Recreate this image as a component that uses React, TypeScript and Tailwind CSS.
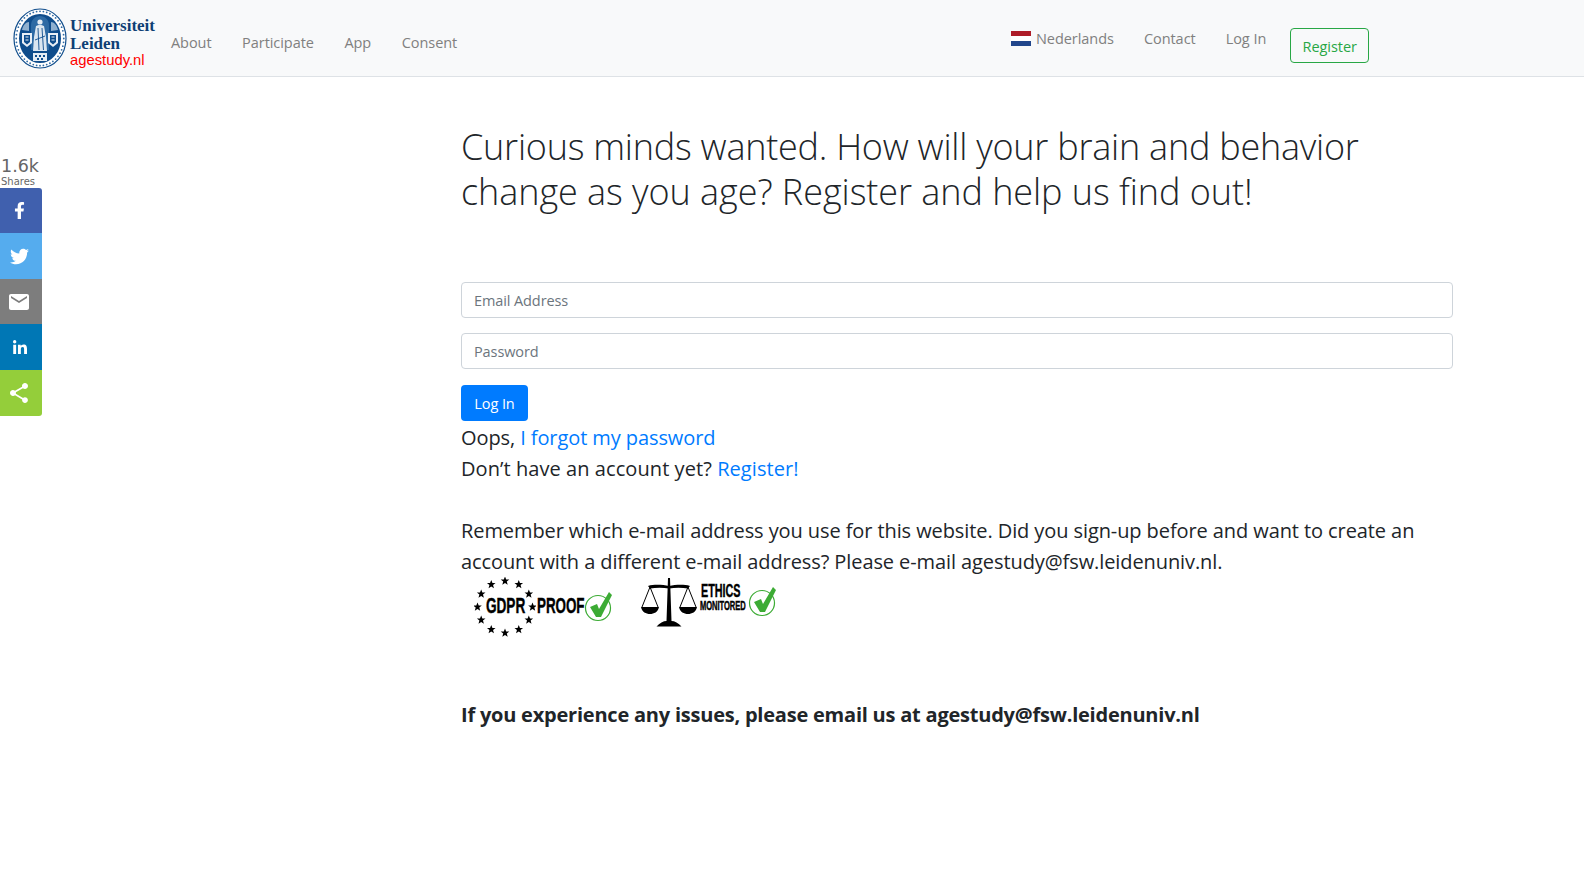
import { FaFacebookF, FaLinkedinIn, FaTwitter } from "react-icons/fa";
import { IoMdShare } from "react-icons/io";
import { MdEmail } from "react-icons/md";

const SANS = "font-['Open_Sans','Noto_Sans',sans-serif]";
const BADGE_TEXT = "absolute origin-left font-['Liberation_Sans',sans-serif] font-bold text-black [-webkit-text-stroke:0.4px_#000]";

function Seal() {
  const dots = Array.from({ length: 44 }, (_, i) => (i / 44) * Math.PI * 2);
  return (
    <svg width="54" height="61" viewBox="0 0 54 61" className="shrink-0">
      <ellipse cx="27" cy="30.5" rx="26" ry="29.5" fill="#fff" stroke="#0f4d8c" strokeWidth="1.2" />
      {dots.map((a, i) => (
        <circle key={i} cx={27 + 23.8 * Math.cos(a)} cy={30.5 + 27.2 * Math.sin(a)} r="0.9" fill="#2f6aa3" />
      ))}
      <ellipse cx="27" cy="30.5" rx="21" ry="24.5" fill="#0f4d8c" />
      {/* arches behind the figure */}
      <path d="M9 22c1-5 4-8 7-8v9zM45 22c-1-5-4-8-7-8v9z" fill="#8fb0cf" />
      <path d="M27 8c-5 0-9 4-9 9v25h18V17c0-5-4-9-9-9z" fill="#2d6aa4" />
      {/* figure */}
      <circle cx="27" cy="14" r="2.600" fill="#e4ecf4" />
      <path d="M23 18c2-1.500 6-1.500 8 0l2 11 1 14H20l1-14z" fill="#dbe6f0" />
      <path d="M25 20l1 22M29 20l1.500 22M22 32l10-4" stroke="#0f4d8c" strokeWidth="0.9" fill="none" />
      {/* shields */}
      <path d="M9 25h10v10l-5 4-5-4z" fill="#eaf0f6" />
      <path d="M35 25h10v10l-5 4-5-4z" fill="#eaf0f6" />
      <path d="M11 27h6v7l-3 2.500-3-2.500zM37 27h6v7l-3 2.500-3-2.500z" fill="#0f4d8c" />
      <path d="M12.500 29h3M12.500 32h3M38.500 29h3M38.500 32h3" stroke="#eaf0f6" strokeWidth="1" />
      <rect x="20" y="45" width="14" height="8" fill="#e4ecf4" />
      <path d="M22 47h2v2h-2zM26 47h2v2h-2zM30 47h2v2h-2zM24 50h2v2h-2zM28 50h2v2h-2z" fill="#0f4d8c" />
    </svg>
  );
}

function Star({ x, y }: { x: number; y: number }) {
  return (
    <polygon
      transform={`translate(${x} ${y})`}
      points="0,-4.500 1.200,-1.400 4.300,-1.400 1.800,.6 2.700,3.800 0,1.900 -2.700,3.800 -1.800,.6 -4.300,-1.400 -1.200,-1.400"
      fill="#000"
    />
  );
}

function Tick() {
  return (
    <svg width="30" height="32" viewBox="0 0 30 32" className="shrink-0">
      <circle cx="14" cy="18" r="12.500" fill="#fff" stroke="#3cab34" strokeWidth="1.200" />
      <path d="M6 17l7-3 2 5L25 2l3 3-11 22h-5z" fill="#3cab34" />
    </svg>
  );
}

function GdprBadge() {
  const stars = Array.from({ length: 12 }, (_, i) => (i / 12) * Math.PI * 2);
  return (
    <div className="relative h-[60px] w-[142px]">
      <svg width="62" height="60" viewBox="0 0 62 60">
        {stars.map((a, i) => (
          <Star key={i} x={31 + 27.5 * Math.sin(a)} y={30 - 26 * Math.cos(a)} />
        ))}
      </svg>
      <span className={`${BADGE_TEXT} left-[12px] top-[16px] scale-x-[.62] text-[22px] leading-[26px]`}>GDPR</span>
      <span className={`${BADGE_TEXT} left-[63px] top-[16px] scale-x-[.61] text-[22px] leading-[26px]`}>PROOF</span>
      <div className="absolute left-[110px] top-[13px]">
        <Tick />
      </div>
    </div>
  );
}

function EthicsBadge() {
  return (
    <div className="relative h-[60px] w-[142px]">
      <svg width="60" height="52" viewBox="0 0 60 52" className="ml-[-2px] mt-[1px]">
        <path d="M28 0h2l1.500 43c3 0 7 2 10 5.500H16.500c3-3.500 7-5.500 10-5.500z" fill="#000" />
        <path d="M8 8c7-2 15-1 21 0 6-1 14-2 21 0l-2 2.500c-6-1-13-1-19 0-6-1-13-1-19 0z" fill="#000" />
        <path d="M10 9L2 29M10 9l8 20M48 9l-8 20M48 9l8 20" stroke="#000" strokeWidth="1" fill="none" />
        <path d="M1 29h18c-1 5-5 7-9 7s-8-2-9-7zM39 29h18c-1 5-5 7-9 7s-8-2-9-7z" fill="#000" />
      </svg>
      <span className={`${BADGE_TEXT} left-[59px] top-[3px] scale-x-[.6] text-[18px] leading-[22px]`}>ETHICS</span>
      <span className={`${BADGE_TEXT} left-[58px] top-[22px] scale-x-[.63] text-[12px] leading-[14px]`}>MONITORED</span>
      <div className="absolute left-[106px] top-[8px]">
        <Tick />
      </div>
    </div>
  );
}

function Flag() {
  return (
    <span className="flex h-[15px] w-5 flex-col">
      <span className="h-[5px] bg-[#ae1c28]" />
      <span className="h-[5px] bg-white" />
      <span className="h-[5px] bg-[#21468b]" />
    </span>
  );
}

function ShareBar() {
  return (
    <div className="absolute left-0 top-[157px] w-[42px] font-['DejaVu_Sans',sans-serif] text-[#666]">
      <div className="pl-[1px] text-[17.500px] leading-[18px]">1.6k</div>
      <div className="pl-[1px] text-[10px] leading-[13px]">Shares</div>
      <div className="flex h-[45px] items-center rounded-tr-[3px] bg-[#4060ae] pl-[11px] text-white">
        <FaFacebookF size={17} />
      </div>
      <div className="flex h-[46px] items-center bg-[#55acee] pl-[10px] text-white">
        <FaTwitter size={19} />
      </div>
      <div className="flex h-[45px] items-center bg-[#7d7d7d] pl-[7px] text-white">
        <MdEmail size={24} />
      </div>
      <div className="flex h-[46px] items-center bg-[#0077b5] pl-[12px] pt-[2px] text-white">
        <FaLinkedinIn size={16} />
      </div>
      <div className="flex h-[46px] items-center rounded-br-[3px] bg-[#94ce3a] pl-[7px] text-white">
        <IoMdShare size={24} />
      </div>
    </div>
  );
}

export default function App() {
  const navLink = "text-[#80807f] text-[14.500px] tracking-[-0.05px]";
  return (
    <div className={`relative min-h-[885px] bg-white ${SANS}`}>
      {/* navbar */}
      <nav className="flex h-[77px] items-start border-b border-[#dee2e6] bg-[#f8f9fa]">
        <div className="flex w-[980px] items-center pl-[13px] pt-[8px]">
          <Seal />
          <div className="ml-[3px] w-[90px] font-['Liberation_Serif',serif]">
            <div className="mt-[8px] text-[17px] leading-[18px] font-bold text-[#0f3f75]">Universiteit</div>
            <div className="text-[17px] leading-[18px] font-bold text-[#0f3f75]">Leiden</div>
            <div className="font-['Liberation_Sans',sans-serif] text-[14.800px] leading-[15px] text-[#ff0000]">agestudy.nl</div>
          </div>
          <div className="ml-[11px] flex gap-[30.500px] pt-[9px]">
            <a className={navLink}>About</a>
            <a className={navLink}>Participate</a>
            <a className={navLink}>App</a>
            <a className={navLink}>Consent</a>
          </div>
        </div>
        <div className="ml-[31px] flex items-start gap-[30px] pt-[28px]">
          <a className={`flex items-center gap-[5px] ${navLink}`}>
            <Flag />
            Nederlands
          </a>
          <a className={navLink}>Contact</a>
          <a className={navLink}>Log In</a>
          <button className="ml-[-6px] h-[35px] w-[79px] rounded border border-[#28a745] pt-[2px] text-[14.500px] tracking-[-0.05px] text-[#28a745]">
            Register
          </button>
        </div>
      </nav>

      <ShareBar />

      <main className="ml-[461px] w-[992px] pt-[47px] text-[20px] leading-[31px] tracking-[-0.09px] text-[#212529]">
        <h1 className="text-[36px] leading-[45px] font-light tracking-[-0.24px]">
          Curious minds wanted. How will your brain and behavior{" "}
          <span className="tracking-[-0.06px]">change as you age? Register and help us find out!</span>
        </h1>

        <form className="mt-[68px] flex flex-col gap-[15px]">
          <input
            placeholder="Email Address"
            className="h-[36px] rounded border border-[#ced4da] px-3 text-[14.500px] tracking-[-0.1px] placeholder:text-[#6c757d]"
          />
          <input
            placeholder="Password"
            className="h-[36px] rounded border border-[#ced4da] px-3 text-[14.500px] tracking-[-0.1px] placeholder:text-[#6c757d]"
          />
        </form>

        <button className="mt-[16px] mb-[1px] block h-[36px] w-[67px] rounded bg-[#007bff] text-[14.500px] tracking-[-0.1px] text-white">
          Log In
        </button>
        <p>
          Oops, <a className="text-[#007bff]">I forgot my password</a>
        </p>
        <p className="tracking-[0.07px]">
          Don’t have an account yet? <a className="text-[#007bff]">Register!</a>
        </p>
        <p className="mt-[31px]">
          Remember which e-mail address you use for this website. Did you sign-up before and want to create an account with a different e-mail address? Please e-mail agestudy@fsw.leidenuniv.nl.
        </p>
        <div className="flex gap-[26px] pl-[13px]">
          <GdprBadge />
          <EthicsBadge />
        </div>
        <p className="mt-[62px] font-bold tracking-[-0.22px]">If you experience any issues, please email us at agestudy@fsw.leidenuniv.nl</p>
      </main>
    </div>
  );
}
